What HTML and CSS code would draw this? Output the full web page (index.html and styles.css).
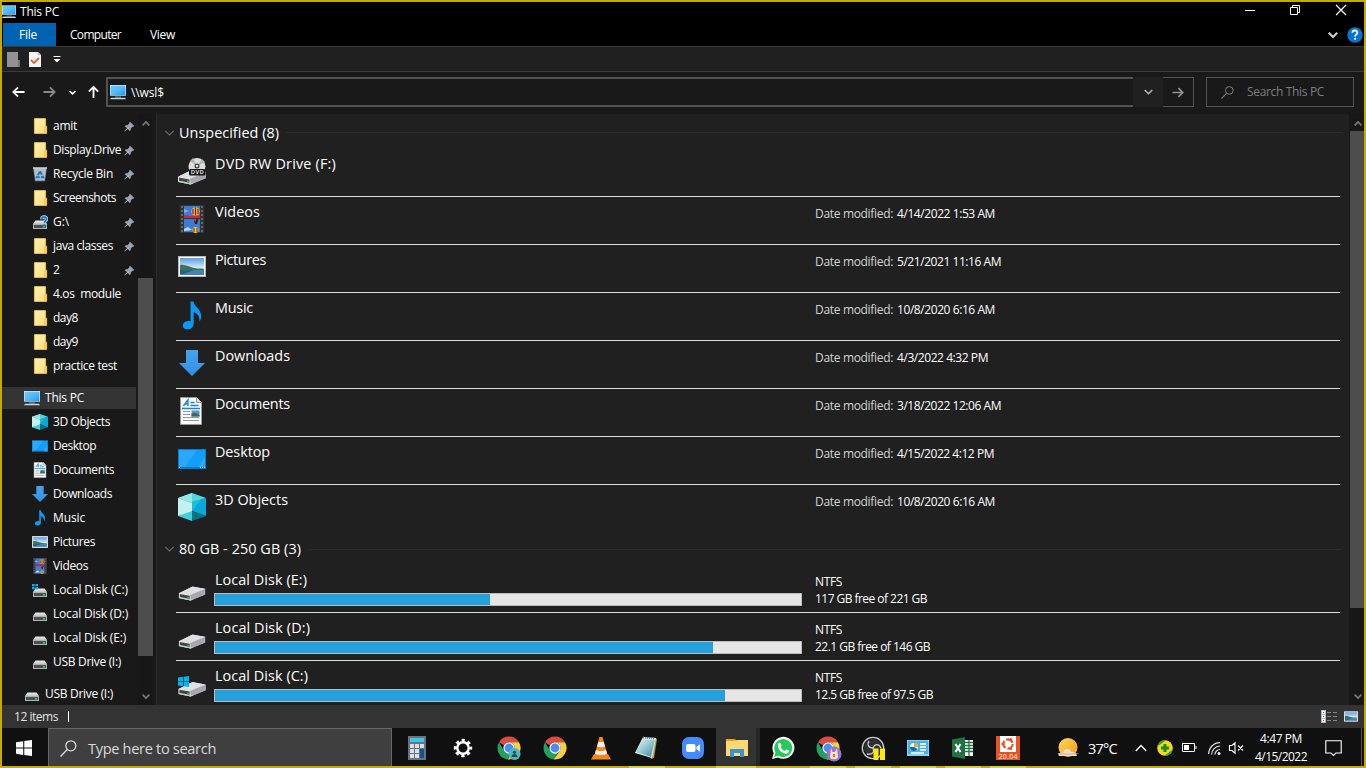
FILE: index.html
```html
<!DOCTYPE html>
<html lang="en">
<head>
<meta charset="utf-8">
<title>This PC</title>
<link rel="stylesheet" href="styles.css">
</head>
<body>
<svg class="defs" width="0" height="0">
<defs>
<linearGradient id="gBlue" x1="0" y1="0" x2="1" y2="1"><stop offset="0" stop-color="#6cc8fb"/><stop offset=".5" stop-color="#55bafa"/><stop offset="1" stop-color="#1e9af0"/></linearGradient>
<linearGradient id="gFold" x1="0" y1="0" x2="1" y2="1"><stop offset="0" stop-color="#ffeeb0"/><stop offset="1" stop-color="#ffdf7d"/></linearGradient>
<linearGradient id="gDisk" x1="0" y1="0" x2="0" y2="1"><stop offset="0" stop-color="#f0f0f2"/><stop offset="1" stop-color="#bfc2c4"/></linearGradient>
<linearGradient id="gSky" x1="0" y1="0" x2="0" y2="1"><stop offset="0" stop-color="#5a9de0"/><stop offset=".6" stop-color="#dbeefa"/></linearGradient>
<linearGradient id="gSun" x1="0" y1="0" x2="1" y2="1"><stop offset="0" stop-color="#ffd95a"/><stop offset="1" stop-color="#f59a1c"/></linearGradient>
<linearGradient id="gDown" x1="0" y1="0" x2="0" y2="1"><stop offset="0" stop-color="#45a3ee"/><stop offset="1" stop-color="#3390e4"/></linearGradient>
<linearGradient id="gNote" x1="0" y1="0" x2="1" y2="1"><stop offset="0" stop-color="#e9f6f7"/><stop offset=".5" stop-color="#8fc6d0"/><stop offset="1" stop-color="#3c8699"/></linearGradient>
<symbol id="pc" viewBox="0 0 16 16"><path fill="#d9f0fb" d="M0 1h16v11H0z"/><path fill="url(#gBlue)" d="M.6 1.6h14.8v9.6H.6z"/><path fill="#7b98aa" d="M0 11.2h16v.8H0zM5 12.5h6v1H5z"/><path fill="#c4d7e1" d="M1 13.8h14l1 1.5H0z"/></symbol>
<symbol id="folder" viewBox="0 0 16 16"><path fill="url(#gFold)" stroke="#efc94c" stroke-width=".8" d="M2.4.5h11.2v7.6h1v7.4H2.4z"/><path fill="#ffd867" stroke="#e3b637" stroke-width=".6" d="M12.6 8.4h2v6.8h-2z"/></symbol>
<symbol id="bin" viewBox="0 0 16 16"><path fill="#7d868d" d="M1 1.5h14l-2 13.8H3z"/><path fill="#b6bdc3" d="M2 2.8h12l-1.6 11.5H3.6z"/><path fill="#dfe3e6" d="M1 1.4h14v1.3H1z"/><path fill="none" stroke="#1379d2" stroke-width="1.9" stroke-dasharray="4 1.1" d="M8 5.2l3.2 6H4.8z"/></symbol>
<symbol id="pin" viewBox="0 0 12 12"><path fill="#9aa7b0" d="M6.5.8l4.7 4.7-1.2.8-.8-.1-1.9 2 .1 1.7-1.1 1.1L4 8.6.8 11.5.3 11 3.2 7.9.9 5.6 2.1 4.5l1.7.1 2-1.9-.1-.9z"/></symbol>
<symbol id="disk" viewBox="0 0 16 16"><path fill="url(#gDisk)" d="M3.4 6.5h9.2L15 10H1z"/><path fill="#c6cbce" d="M1 10h14v5H1z"/><path fill="#4a4f51" d="M1.8 10.8h12.4v3.4H1.8z"/><path fill="#27e04c" d="M11 12h2v1.4h-2z"/></symbol>
<symbol id="win" viewBox="0 0 12 12"><path fill="currentColor" d="M0 1.7l5.4-.8v4.8H0zM6.2.8L12 0v5.7H6.2zM0 6.4h5.4v4.8L0 10.4zM6.2 6.4H12V12l-5.8-.8z"/></symbol>
<symbol id="diskc" viewBox="0 0 16 16"><use href="#disk"/><path fill="#00b2f2" d="M0 2h2.7v2.3H0zM3.4 2H6v2.3H3.4zM0 5h2.7v2.3H0zM3.4 5H6v2.3H3.4z"/></symbol>
<symbol id="unk" viewBox="0 0 16 16"><use href="#disk"/><path d="M9.7 5.2C9.8 2.100 14.7 2.200 14.6 5.100c0 1.900-2.200 1.900-2.200 3.700" fill="none" stroke="#dceefa" stroke-width="3.200"/><path d="M9.7 5.200C9.800 2.100 14.700 2.200 14.600 5.100c0 1.900-2.200 1.900-2.200 3.700m0 1.400v2" fill="none" stroke="#1678c8" stroke-width="1.900"/></symbol>
<symbol id="cube" viewBox="0 0 28 28"><path fill="#55d5dc" d="M14 0l14 5-14 5L0 5z"/><path fill="#91e8e9" d="M14 0v10L0 5z"/><path fill="#c4f1ef" d="M0 5l14 5v10L0 23z"/><path fill="#42cfda" d="M0 23l14-5v10z"/><path fill="#0aa7d8" d="M14 9l14-4v18l-14-5z"/><path fill="#1bc0d9" d="M14 9l9-2.6L14 18z"/><path fill="#087383" d="M14 18l14 5-14 5z"/></symbol>
<symbol id="desk" viewBox="0 0 28 20"><path fill="#057cc9" d="M0 0h28v20H0z"/><path fill="#149efb" d="M1 1h26v17H1z"/><path fill="#35adff" d="M1 1h18L7 18H1zM20 18l7-10v10z" opacity=".65"/><path fill="#fff" d="M1 18.2h1v.8H1zM22 18.2h1v.8h-1zm2 0h1v.8h-1zm2 0h1v.8h-1z"/></symbol>
<symbol id="doc" viewBox="0 0 22 28"><path fill="#fafafa" stroke="#999" d="M.5.5h16l5 5v22H.5z"/><path fill="#ddd" stroke="#999" d="M16.5.5v5h5"/><path stroke="#1686d4" stroke-width="1.300" fill="none" d="M3.500 9L8 2.800V9M5 7h3M10.500 5.500h4M10.500 8.500h8M2 11.500h18"/><path stroke="#999" stroke-width="1" d="M3 14.5h7M3 17.5h7M3 20.5h16M3 23.5h16"/><path fill="#5a93c4" d="M11.5 13.5h8v6h-8z"/><path fill="#386b55" d="M11.5 17c3-2 5-1 8 1v1.5h-8z"/></symbol>
<symbol id="down" viewBox="0 0 26 26"><path fill="url(#gDown)" d="M7 0h12v13h7L13 26 0 13h7z"/></symbol>
<symbol id="music" viewBox="0 0 20 30"><path fill="#0d98f5" d="M8.5.5h3c.5 5 8 8 8 15 0 2.4-.7 4.2-1.8 6 .3-5.5-1.600-8-6-10v12c0 3.500-3 5.700-6 5.700-3.300 0-5.700-1.600-5.200-4.500.5-2.800 4.500-4.800 8-3.500z"/></symbol>
<symbol id="pic" viewBox="0 0 28 21"><path fill="#b7bbbc" d="M0 0h28v21H0z"/><path fill="#fff" d="M1 1h26v19H1z"/><path fill="url(#gSky)" d="M2 2h24v17H2z"/><path fill="#3c7359" d="M2 9c5-1 9 2 14 3s7 0 10 1v2H2z"/><path fill="#4484b0" d="M2 14h24v5H2z"/><path fill="#28618b" d="M2 14h14L6 18H2z"/></symbol>
<symbol id="video" viewBox="0 0 24 28"><path fill="#343434" d="M0 0h24v28H0z"/><path stroke="#666" stroke-width="2" stroke-dasharray="2 2" d="M2 1v27M22 1v27"/><path fill="#3e78d8" d="M4 1h16v12H4zM4 14h16v13H4z"/><path fill="#c72d3d" d="M4 10l7 1 9-1v3H4z"/><path fill="#79aef0" d="M4 4l5 2-5 2z"/><circle cx="15.5" cy="6.500" r="4.200" fill="#f2b81a"/><path stroke="#7b1d4e" stroke-width="1.200" d="M15.5 2.500v8M13 4v5M18 4v5"/><path fill="#222" d="M13.500 14h5l-1.500 5h-2z"/><path fill="#e7471f" d="M13.500 14h3l-1 3z"/><circle cx="15.5" cy="25" r="3" fill="#edd325"/><path stroke="#7b3d1e" stroke-width="1.200" d="M14 23v4M17 23v4"/><path fill="#bbd9ff" d="M4 24l4-2 4 3-8 1z"/></symbol>
<symbol id="drive" viewBox="0 0 28 16"><path fill="#e8e8ea" d="M0 7.8L14.5.5 28 3v6L12.5 15.5 0 12.8z"/><path fill="#e0e0e4" d="M.5 7.5L14.5.8 27.5 3 12 9.7z"/><path fill="#a7a8ab" d="M12 9.7L28 3v6l-15.5 6.5z"/><path fill="#434546" d="M1 8.4l10.5 2v4L1 12.2z"/><path fill="#c8c9cb" d="M0 13l12.5 2.5 3-1.2L1 11.8z"/><path fill="#25b83e" d="M9 11.5h2v2H9z"/></symbol>
<symbol id="dvd" viewBox="0 0 28 28"><use href="#drive" y="12" width="28" height="16"/><circle cx="19" cy="9.500" r="8.500" fill="#dcdddd"/><path fill="#b1b4b5" d="M19 9L12 4l3-3zM19 9l8-4-3-3z"/><circle cx="19" cy="9" r="2.500" fill="#36393b"/><circle cx="19" cy="9" r="1.300" fill="#ddd"/><rect x="11" y="12" width="16.500" height="6.500" rx="1.500" fill="#111"/><text x="19.200" y="17.300" text-anchor="middle" font-family="Open Sans,sans-serif" font-size="5.800" font-weight="600" fill="#fff" textLength="13">DVD</text></symbol>
<symbol id="mag" viewBox="0 0 16 16"><circle cx="10.2" cy="5.5" r="4.7" fill="none" stroke="currentColor" stroke-width="1.2"/><path stroke="currentColor" stroke-width="1.3" d="M6.8 9L.5 15.5"/></symbol>
<symbol id="chev" viewBox="0 0 10 6"><path fill="none" stroke="currentColor" d="M.8.8L5 5 9.2.8"/></symbol>
<symbol id="arrow" viewBox="0 0 14 12"><path fill="none" stroke="currentColor" stroke-width="2" d="M13.5 6H1.5M6.5 1l-5 5 5 5"/></symbol>
<symbol id="chrome" viewBox="0 0 24 24"><path fill="#dd4b3e" d="M2 6.3A11.5 11.5 0 0 1 22 6.3H12A5.7 5.7 0 0 0 7 9.2z"/><path fill="#20a15d" d="M2 6.3A11.5 11.5 0 0 0 10.7 23.4L16 15A5.8 5.8 0 0 1 7 14.8z"/><path fill="#fbce3c" d="M22 6.3A11.5 11.5 0 0 1 10.7 23.4L17 14.5A5.7 5.7 0 0 0 12 6.3z"/><circle cx="12" cy="12" r="5.7" fill="#f6f4ee"/><circle cx="12" cy="12" r="4.4" fill="#4b8df0"/></symbol>
</defs>
</svg>
<div class="screen">
  <header class="titlebar">
    <svg class="i15"><use href="#pc"/></svg><span class="t" data-w="39">This PC</span>
    <div class="winbtns">
      <svg width="10" height="10"><path d="M0 5.5h10" stroke="#fff"/></svg>
      <svg width="10" height="10"><path d="M.5 2.5h7v7h-7zM2.5 2.5v-2h7v7h-2" fill="none" stroke="#fff"/></svg>
      <svg width="10" height="10"><path d="M0 0l10 10M10 0L0 10" stroke="#fff" stroke-width="1.2"/></svg>
    </div>
  </header>
  <nav class="tabs">
    <span class="tab file"><span class="t" data-w="18">File</span></span>
    <span class="tab comp"><span class="t" data-w="51">Computer</span></span>
    <span class="tab view"><span class="t" data-w="25">View</span></span>
    <div class="help"><svg class="hchev"><use href="#chev"/></svg><svg width="16" height="16"><circle cx="8" cy="8" r="7.7" fill="#0873d4"/><path d="M5.4 5.8C5.6 2.6 10.7 2.8 10.3 6c-.2 1.7-2.2 1.6-2.2 3.5m0 1.3v2" fill="none" stroke="#fff" stroke-width="1.8"/></svg></div>
  </nav>
  <div class="quick">
    <svg width="13" height="15"><path fill="#929292" d="M0 0h11v8h2v7H0z"/><path fill="#777" d="M11 8h2v7h-2z"/></svg>
    <svg width="12" height="15"><path fill="#f5f5f5" d="M0 0h9l3 3v12H0z"/><path fill="#bbb" d="M9 0v3h3z"/><path d="M2 8l3 3 5-5" fill="none" stroke="#e9602c" stroke-width="1.8"/></svg>
    <svg width="8" height="7"><path fill="#fff" d="M.5 0h7v1h-7zM.5 3h7L4 6.5z"/></svg>
  </div>
  <div class="address">
    <div class="arrows">
      <svg class="ar"><use href="#arrow"/></svg><svg class="ar fwd"><use href="#arrow"/></svg><svg class="tiny"><use href="#chev"/></svg><svg class="ar up"><use href="#arrow"/></svg>
    </div>
    <div class="path"><svg class="i16"><use href="#pc"/></svg><span class="t" data-w="33">\\wsl$</span></div>
    <div class="drop"><svg class="c9"><use href="#chev"/></svg></div>
    <div class="go"><svg class="goar"><use href="#arrow"/></svg></div>
    <div class="search"><svg class="smag"><use href="#mag"/></svg><span class="t" data-w="77">Search This PC</span></div>
  </div>
  <main class="body">
    <aside class="side">
      <div class="tree">
        <div class="n"><svg><use href="#folder"/></svg><span class="t" data-w="24">amit</span><svg class="p"><use href="#pin"/></svg></div>
        <div class="n"><svg><use href="#folder"/></svg><span class="t" data-w="68">Display.Drive</span><svg class="p"><use href="#pin"/></svg></div>
        <div class="n"><svg><use href="#bin"/></svg><span class="t" data-w="60">Recycle Bin</span><svg class="p"><use href="#pin"/></svg></div>
        <div class="n"><svg><use href="#folder"/></svg><span class="t" data-w="63">Screenshots</span><svg class="p"><use href="#pin"/></svg></div>
        <div class="n"><svg><use href="#unk"/></svg><span class="t" data-w="16">G:\</span><svg class="p"><use href="#pin"/></svg></div>
        <div class="n"><svg><use href="#folder"/></svg><span class="t" data-w="60">java classes</span><svg class="p"><use href="#pin"/></svg></div>
        <div class="n"><svg><use href="#folder"/></svg><span class="t">2</span><svg class="p"><use href="#pin"/></svg></div>
        <div class="n"><svg><use href="#folder"/></svg><span class="t" data-w="68">4.os&nbsp; module</span></div>
        <div class="n"><svg><use href="#folder"/></svg><span class="t" data-w="25">day8</span></div>
        <div class="n"><svg><use href="#folder"/></svg><span class="t" data-w="25">day9</span></div>
        <div class="n"><svg><use href="#folder"/></svg><span class="t" data-w="64">practice test</span></div>
        <div class="n top sel"><svg><use href="#pc"/></svg><span class="t" data-w="39">This PC</span></div>
        <div class="n"><svg><use href="#cube"/></svg><span class="t" data-w="57">3D Objects</span></div>
        <div class="n"><svg><use href="#desk"/></svg><span class="t" data-w="43">Desktop</span></div>
        <div class="n"><svg><use href="#doc"/></svg><span class="t" data-w="61">Documents</span></div>
        <div class="n"><svg><use href="#down"/></svg><span class="t" data-w="59">Downloads</span></div>
        <div class="n"><svg><use href="#music"/></svg><span class="t" data-w="32">Music</span></div>
        <div class="n"><svg><use href="#pic"/></svg><span class="t" data-w="42">Pictures</span></div>
        <div class="n"><svg><use href="#video"/></svg><span class="t" data-w="35">Videos</span></div>
        <div class="n"><svg><use href="#diskc"/></svg><span class="t" data-w="75">Local Disk (C:)</span></div>
        <div class="n"><svg><use href="#disk"/></svg><span class="t" data-w="75">Local Disk (D:)</span></div>
        <div class="n"><svg><use href="#disk"/></svg><span class="t" data-w="73">Local Disk (E:)</span></div>
        <div class="n"><svg><use href="#disk"/></svg><span class="t" data-w="68">USB Drive (I:)</span></div>
        <div class="n top"><svg><use href="#disk"/></svg><span class="t" data-w="68">USB Drive (I:)</span></div>
      </div>
      <div class="sbar left"><svg class="sc flip"><use href="#chev"/></svg><i></i><svg class="sc"><use href="#chev"/></svg></div>
    </aside>
    <section class="list">
      <div class="group"><svg class="gc"><use href="#chev"/></svg><span class="b" data-w="100">Unspecified (8)</span><hr></div>
      <div class="row"><svg class="ic"><use href="#dvd"/></svg><span class="b" data-w="121">DVD RW Drive (F:)</span></div>
      <div class="row"><svg class="ic"><use href="#video"/></svg><span class="b" data-w="45">Videos</span><span class="date"><em class="t" data-w="78">Date modified:</em><span class="t" data-w="98">4/14/2022 1:53 AM</span></span></div>
      <div class="row"><svg class="ic pic"><use href="#pic"/></svg><span class="b" data-w="51">Pictures</span><span class="date"><em class="t" data-w="78">Date modified:</em><span class="t" data-w="104">5/21/2021 11:16 AM</span></span></div>
      <div class="row"><svg class="ic mus"><use href="#music"/></svg><span class="b" data-w="38">Music</span><span class="date"><em class="t" data-w="78">Date modified:</em><span class="t" data-w="98">10/8/2020 6:16 AM</span></span></div>
      <div class="row"><svg class="ic dwn"><use href="#down"/></svg><span class="b" data-w="75">Downloads</span><span class="date"><em class="t" data-w="78">Date modified:</em><span class="t" data-w="91">4/3/2022 4:32 PM</span></span></div>
      <div class="row"><svg class="ic docu"><use href="#doc"/></svg><span class="b" data-w="75">Documents</span><span class="date"><em class="t" data-w="78">Date modified:</em><span class="t" data-w="104">3/18/2022 12:06 AM</span></span></div>
      <div class="row"><svg class="ic deskic"><use href="#desk"/></svg><span class="b" data-w="55">Desktop</span><span class="date"><em class="t" data-w="78">Date modified:</em><span class="t" data-w="97">4/15/2022 4:12 PM</span></span></div>
      <div class="row last"><svg class="ic"><use href="#cube"/></svg><span class="b" data-w="73">3D Objects</span><span class="date"><em class="t" data-w="78">Date modified:</em><span class="t" data-w="98">10/8/2020 6:16 AM</span></span></div>
      <div class="group second"><svg class="gc"><use href="#chev"/></svg><span class="b" data-w="122">80 GB - 250 GB (3)</span><hr></div>
      <div class="row"><svg class="ic drv"><use href="#drive"/></svg><div class="vol"><span class="b" data-w="92">Local Disk (E:)</span><div class="bar"><i style="width:275px"></i></div></div><div class="cap"><span class="t" data-w="27">NTFS</span><span class="t" data-w="112">117 GB free of 221 GB</span></div></div>
      <div class="row"><svg class="ic drv"><use href="#drive"/></svg><div class="vol"><span class="b" data-w="95">Local Disk (D:)</span><div class="bar"><i style="width:498px"></i></div></div><div class="cap"><span class="t" data-w="27">NTFS</span><span class="t" data-w="115">22.1 GB free of 146 GB</span></div></div>
      <div class="row"><svg class="ic cdrv" viewBox="0 0 28 21"><use href="#drive" y="5.5" width="28" height="15.5"/><use href="#win" class="cy" width="11" height="11"/></svg><div class="vol"><span class="b" data-w="93">Local Disk (C:)</span><div class="bar"><i style="width:510px"></i></div></div><div class="cap"><span class="t" data-w="27">NTFS</span><span class="t" data-w="118">12.5 GB free of 97.5 GB</span></div></div>
    </section>
    <div class="sbar right"><svg class="sc flip"><use href="#chev"/></svg><i></i><svg class="sc"><use href="#chev"/></svg></div>
  </main>
  <div class="status"><span class="t" data-w="44">12 items</span><b></b>
    <div class="modes"><svg width="16" height="13"><path fill="#bbb" d="M0 0h5v13H0z"/><path fill="#fff" d="M1 1h3v3H1zM1 5h3v3H1zM1 9h3v3H1z"/><path fill="#26a" d="M2 2h1v1H2zM2 6h1v1H2z"/><path fill="#c33" d="M2 10h1v1H2z"/><path stroke="#858585" d="M6 2.5h4m2 0h4M6 6.5h4m2 0h4M6 10.5h4m2 0h4"/></svg><svg width="14" height="11"><use href="#pic"/></svg></div>
  </div>
  <footer class="task">
    <div class="start"><svg><use href="#win"/></svg></div>
    <div class="tsearch"><svg><use href="#mag"/></svg><span data-w="128">Type here to search</span></div>
    <div class="apps">
      <div class="a"><svg width="18" height="24"><path fill="#68737e" d="M0 0h18v24H0z"/><path fill="#3cc5ef" d="M2 2h14v4H2z"/><path fill="#d9dfe5" d="M2 8h4v4H2zM7 8h4v4H7zM12 8h4v4h-4zM2 13h4v4H2zM7 13h4v4H7zM2 18h4v4H2zM7 18h4v4H7z"/><path fill="#15528d" d="M12 13h4v9h-4z"/></svg></div>
      <div class="a"><svg width="20" height="20"><circle cx="10" cy="10" r="7.700" fill="none" stroke="#fff" stroke-width="3" stroke-dasharray="3.200 2.847" stroke-dashoffset="1.600"/><circle cx="10" cy="10" r="5.700" fill="none" stroke="#fff" stroke-width="2.400"/></svg></div>
      <div class="a"><svg width="24" height="24"><use href="#chrome"/><circle cx="17.500" cy="18" r="6" fill="#50b7bd"/><circle cx="17.500" cy="16.300" r="1.600" fill="#174f56"/><path fill="#174f56" d="M14.500 21c0-4 6-4 6 0z"/></svg></div>
      <div class="a"><svg width="24" height="24"><use href="#chrome"/></svg></div>
      <div class="a"><svg width="20" height="23"><path fill="#f58812" d="M3 17h14l3 5.500H0z"/><path fill="#f58812" d="M8.500 0h3l5 18c-2 2-11 2-13 0z"/><path fill="#f1f1f1" d="M7.300 5h5.400l1.300 4.500c-2 1-6 1-8 0zM5 13c3 1.500 7 1.500 10 0l1 3.500c-3 2-9 2-12 0z"/></svg></div>
      <div class="a"><svg width="24" height="24"><path fill="#b49a58" d="M20 2l2 1-3 19-3 1z"/><path fill="#e8f0f0" d="M8 1l13 1-4 20L0 17z"/><path fill="url(#gNote)" d="M8 3l12 1-4 17L1 16z"/><path stroke="#68777b" stroke-dasharray="1 1" stroke-width="2" d="M8 1.500l12 1"/></svg></div>
      <div class="a"><svg width="24" height="24"><rect x="1" y="1" width="22" height="22" rx="7" fill="#438bff"/><rect x="5" y="8" width="9.500" height="8" rx="2" fill="#fff"/><path fill="#fff" d="M15.500 10.700l3.500-2.500v7.600l-3.500-2.500z"/></svg></div>
      <div class="a ex"><svg width="22" height="20"><path fill="#e3a11b" d="M0 1h9l2 2v2H0z"/><path fill="#ffd86f" d="M0 3h9l2-1h11v16H0z"/><path fill="#3593dc" d="M4 19v-8h14v8h-4v-4H8v4z"/></svg></div>
      <div class="a n45"><svg width="24" height="24"><path fill="#fff" d="M1 23l1.700-6A11 11 0 1 1 7 21.400z"/><path fill="#27c95b" d="M3 21l1.400-4.500A9 9 0 1 1 7.500 19.700z"/><path fill="#fff" d="M7.300 7.500c1-1.300 2-.9 2.400 0l.8 1.800c.2.700-.5 1.200-1 1.700 1 2 2.300 3.200 4.200 4 .7-.7 1.300-1.800 2-1.500l2 1c1 .5-.5 3-2.400 3.200-4.600 0-10-5.400-8-10.200z"/></svg></div>
      <div class="a n45"><svg width="24" height="24"><use href="#chrome" width="24" height="24"/><circle cx="18" cy="18" r="7.500" fill="#9075d8"/><path fill="#ffe5bd" d="M15 12l1.500 4h2.500l2-4 1 9c0 3-8 3-8 0z"/><path fill="#ef6b31" d="M17 18h2v3h-2z"/></svg></div>
      <div class="a n45"><svg width="24" height="24"><circle cx="12" cy="12" r="10.700" fill="#171718" stroke="#ccc" stroke-width="1.300"/><circle cx="12" cy="12" r="9" fill="#303033"/><path fill="none" stroke="#c8c8c8" stroke-width="1.400" d="M12 12c-5 0-6-4-4-7M12 12c2-5 6-4 8 0M12 12c2 4-1 7-6 6"/><path fill="#ffe90b" d="M12.500 12.500h5V24h-5zM19 12.500h5V24h-5z"/></svg></div>
      <div class="a n45"><svg width="22" height="16"><path fill="#84d2f7" d="M0 0h22v16H0z"/><path fill="#4eb0e5" d="M1 1h20v13H1z"/><circle cx="7" cy="7" r="4" fill="#eff"/><path fill="#f6a21e" d="M7 7V3a4 4 0 0 1 4 4z"/><path fill="#1767a8" d="M7 7l3.500 2A4 4 0 0 1 3 7z"/><path stroke="#fff" stroke-width="1.500" d="M13 4h6M13 7h6M13 10h6M4 13h13"/></svg></div>
      <div class="a n45"><svg width="22" height="22"><path fill="#fff" d="M11 3h10v16H11z"/><path stroke="#207245" stroke-width="1.300" d="M12 5.500h9M12 8.500h9M12 11.500h9M12 14.500h9M17 3v16"/><path fill="#207245" d="M0 2.500L13 0v22L0 19.500z"/><path stroke="#fff" stroke-width="2" d="M3.500 7l5 8M8.500 7l-5 8"/></svg></div>
      <div class="a n45"><svg width="24" height="24"><path fill="#e9531f" d="M0 0h24v24H0z"/><path fill="#fff" d="M4 0h16v16H4z"/><circle cx="12" cy="8" r="4.600" fill="none" stroke="#e9531f" stroke-width="2.200" stroke-dasharray="7.600 2"/><g fill="#e9531f"><circle cx="6.800" cy="8" r="1.500"/><circle cx="14.700" cy="3.400" r="1.500"/><circle cx="14.700" cy="12.600" r="1.500"/></g><text x="12" y="23.300" text-anchor="middle" font-family="Open Sans,sans-serif" font-size="7" fill="#fff" textLength="19">20.04</text></svg></div>
    </div>
    <div class="tray">
      <svg width="23" height="20"><circle cx="11" cy="9.500" r="9.500" fill="url(#gSun)"/><path fill="#f1dfcd" d="M2 18c-2-3 2-4 4-3 0-5 7-5 8-1 2-1 5 0 6 4z"/><path fill="#d6ba9b" d="M0 15h22l-4 2H3z" opacity=".7"/></svg>
      <span class="deg" data-w="29">37°C</span>
      <svg class="up2" width="12" height="8"><path d="M.8 7L6 1.500 11.200 7" fill="none" stroke="#fff" stroke-width="1.300"/></svg>
      <svg class="plus" width="16" height="16"><circle cx="8" cy="8" r="7.800" fill="#f0d91e"/><path fill="#3f9f2c" d="M.5 6a8 8 0 0 1 8-5.800L6 2.500 2.500 5zM15.500 10a8 8 0 0 1-8 5.800l3-2.300 3-2.500z"/><path fill="#188c2a" d="M6.500 4h3v2.500H12v3H9.500V12h-3V9.500H4v-3h2.500z"/></svg>
      <svg class="bat" width="15" height="10"><path d="M.5.5h12v8H.5zM14 3v3" fill="none" stroke="#fff"/><path fill="#fff" d="M2 2h5v5H2z"/></svg>
      <svg class="wifi" width="13" height="13"><g fill="none" stroke="#ddd" stroke-width="1.200"><path d="M.7 12A11.300 11.300 0 0 1 12 .7M3.700 12.500A8.500 8.500 0 0 1 12 4M7 12.500A5 5 0 0 1 12 7.500"/></g><circle cx="11" cy="11.500" r="1.500" fill="#fff"/></svg>
      <svg class="vol2" width="15" height="12"><path fill="none" stroke="#fff" stroke-width="1.100" d="M.5 3.500H3L6 .8v10.400L3 8.500H.5zM9 3.500l5 5M14 3.500l-5 5"/></svg>
      <div class="clock"><span class="t" data-w="42">4:47 PM</span><span class="t" data-w="52">4/15/2022</span></div>
      <svg class="note" width="17" height="17"><path fill="none" stroke="#fff" stroke-width="1.100" d="M.8.700h15.400v12.300H11L8.500 15.500 6 13H.8z"/></svg>
    </div>
  </footer>
  <div class="frame"><i class="m1"></i><i class="m2"></i><i class="m3"></i><i class="m3 m4"></i><i class="m3 m5"></i><i class="m3 m6"></i><i class="m3 m7"></i></div>
</div>
<script src="fit.js"></script>
</body>
</html>
```
FILE: styles.css
```css
* { box-sizing: border-box; }
body { margin: 0; background: #000; overflow: hidden; font-family: "Open Sans", "Noto Sans", sans-serif; color: #fff; }
svg { display: block; flex: none; overflow: visible; stroke-width: 1.5; }
.defs { position: absolute; }
i, em { font-style: normal; }
.screen { position: relative; width: 1366px; height: 768px; display: flex; flex-direction: column; white-space: nowrap; }
.t { font-size: 12px; line-height: 16px; }
.b { font-size: 14.4px; line-height: 20px; }
.titlebar { height: 23px; padding: 0 20px 0 2px; display: flex; align-items: center; background: #000; }
.titlebar .t, .tab .t, .status .t { padding-top: 1px; }
.i15 { width: 14px; height: 15px; margin-right: 4px; }
.i16 { width: 16px; height: 16px; margin-right: 5px; }
.winbtns { margin-left: auto; display: flex; gap: 35px; padding-bottom: 3px; }
.winbtns svg { stroke-width: 1; }
.winbtns svg:last-child { margin-left: 1px; }
.tabs { height: 23px; display: flex; align-items: center; background: #000; padding-left: 3px; }
.tab { display: flex; align-items: center; height: 23px; }
.file { width: 53px; padding-left: 16px; background: #0063b1; }
.comp { padding-left: 14px; width: 94px; }
.help { margin-left: auto; display: flex; align-items: center; gap: 9px; padding-right: 3px; }
.hchev { width: 10px; height: 6px; color: #ccc; stroke-width: 2.2; }
.quick { height: 26px; border-top: 1px solid #3b3b3b; border-bottom: 1px solid #3b3b3b; background: #202020; display: flex; align-items: center; padding-left: 7px; }
.quick svg:nth-child(2) { margin: 0 12px 0 9px; }
.address { height: 41px; background: #191919; display: flex; align-items: center; padding-bottom: 1px; }
.arrows { width: 106px; display: flex; align-items: center; padding-left: 12px; }
.ar { width: 13px; height: 12px; }
.fwd { transform: scaleX(-1); color: #888; margin-left: 18px; }
.tiny { width: 7px; height: 5px; margin-left: 13px; stroke-width: 2.2; }
.up { transform: rotate(90deg); margin-left: 11px; }
.path { width: 1027px; height: 30px; border: 2px solid #535353; border-right: 0; display: flex; align-items: center; padding-left: 2px; }
.path .t { padding-top: 2px; }
.drop { width: 30px; height: 30px; background: #202020; display: flex; align-items: center; justify-content: center; color: #bbb; }
.c9 { width: 9px; height: 6px; }
.go { width: 31px; height: 30px; border: 1px solid #535353; border-left: 0; display: flex; align-items: center; justify-content: center; color: #949494; }
.goar { width: 12px; height: 11px; transform: scaleX(-1); }
.search { margin-left: 12px; width: 148px; height: 30px; border: 1px solid #535353; display: flex; align-items: center; color: #7d7d7d; }
.smag { width: 13px; height: 13px; margin: 0 12px 0 14px; }
.search .t { margin-left: 1px; }
.body { height: 592px; display: flex; background: #202020; overflow: hidden; }
.side { width: 157px; display: flex; background: #191919; border-right: 1px solid #2b2b2b; }
.tree { width: 138px; padding-top: 1px; }
.n { height: 24px; display: flex; align-items: center; padding-left: 32px; }
.n svg { width: 16px; height: 16px; margin-right: 5px; }
.n .p { width: 11px; height: 11px; margin: 0 3px 0 auto; }
.top { margin-top: 8px; padding-left: 24px; }
.sel { background: linear-gradient(#333,#333) 2px 1px / 134px 22px no-repeat; }
.sbar { display: flex; flex-direction: column; align-items: center; color: #777; background: #171717; }
.sbar i { background: #4d4d4d; }
.sc { width: 8px; height: 5px; stroke-width: 2.2; }
.flip { transform: scaleY(-1); margin-top: 8px; }
.left { width: 15px; }
.left i { width: 15px; height: 378px; margin-top: 152px; margin-bottom: 38px; }
.right { width: 17px; }
.right i { width: 15px; height: 477px; margin-top: 5px; margin-bottom: 86px; }
.list { width: 1192px; padding-left: 7px; border-top: 1px solid #191919; }
.group { height: 35px; display: flex; align-items: center; padding-top: 2px; }
.second { height: 32px; padding-top: 0; }
.gc { width: 11px; height: 6px; margin-right: 4px; color: #6b6b6b; stroke-width: 1.1; }
.group hr { border: 0; height: 1px; background: #2c2c2c; flex: 1; margin: 0 7px 0 7px; }
.row { width: 1164px; height: 48px; margin-left: 12px; border-bottom: 1px solid #dedede; display: flex; align-items: flex-start; }
.last { border-color: transparent; }
.ic { width: 28px; height: 28px; margin: 8px 9px 0 2px; }
.pic { height: 21px; margin-top: 11px; }
.deskic { height: 20px; margin-top: 12px; }
.mus { height: 29px; }
.dwn { height: 26px; margin-top: 9px; }
.docu { margin: 8px 10px 0 1px; }
.drv { height: 15px; margin-top: 21px; }
.cdrv { height: 21px; margin-top: 15px; }
.cy { color: #00b5f0; }
.row > .b { width: 600px; margin-top: 5px; }
.date { display: flex; margin-top: 9px; }
.date em { color: #d4d4d4; width: 82px; }
.vol { width: 600px; padding-top: 5px; display: flex; flex-direction: column; align-items: flex-start; }
.bar { width: 588px; height: 13px; margin: 3px 0 0 -1px; background: #e6e6e6; border: 1px solid #bcbcbc; display: flex; }
.bar i { background: #26a0da; }
.cap { display: flex; flex-direction: column; align-items: flex-start; padding-top: 9px; gap: 1px; }
.status { height: 23px; background: #333; display: flex; align-items: center; padding: 0 8px 0 14px; color: #e2e2e2; }
.status b { width: 1px; height: 11px; background: #fff; margin-left: 10px; }
.modes { margin-left: auto; display: flex; align-items: center; gap: 7px; }
.modes svg { stroke-width: 1; }
.task { height: 40px; background: #101010; display: flex; }
.task::after { content: ""; width: 1px; background: #555; margin: 0 4px 0 auto; }
.start { width: 48px; display: flex; align-items: center; padding-left: 16px; }
.start svg { width: 16px; height: 16px; }
.tsearch { width: 344px; border: 1px solid #666; background: #3f3f3f; display: flex; align-items: center; padding-left: 11px; font-size: 14.6px; color: #dadada; }
.tsearch svg { width: 17px; height: 17px; margin-right: 11px; }
.apps { display: flex; padding-left: 2px; }
.a { width: 46px; display: flex; align-items: center; justify-content: center; }
.ex { width: 44px; background: #333; border-right: 4px solid #262626; padding-left: 1px; }
.n45 { width: 45px; }
.tray { display: flex; align-items: center; margin-left: 27px; }
.tray svg, .row svg, .n svg, .a svg { stroke-width: 1; }
.deg { font-size: 14.6px; margin-left: 8px; }
.up2 { margin-left: 18px; }
.plus { margin-left: 10px; }
.bat { margin-left: 9px; }
.wifi { margin-left: 11px; margin-top: 1px; }
.vol2 { margin-left: 8px; }
.clock { margin-left: 11px; width: 52px; display: flex; flex-direction: column; align-items: center; }
.clock .t { line-height: 18px; }
.note { margin-left: 18px; }
.frame { position: absolute; inset: 0; border: 2px solid #c5aa00; pointer-events: none; }
.frame i { position: absolute; bottom: -2px; height: 2px; width: 36px; background: #d8cf35; }
.frame .m1 { left: 627px; }
.frame .m2 { left: 714px; width: 40px; }
.frame .m3 { left: 808px; }
.frame .m4 { left: 853px; }
.frame .m5 { left: 898px; }
.frame .m6 { left: 943px; }
.frame .m7 { left: 988px; }
```
FILE: fit.js
```js
// Tracks each label so that it occupies its declared width.
document.querySelectorAll('[data-w]').forEach(function (el) {
  var range = document.createRange();
  range.selectNodeContents(el);
  var natural = range.getBoundingClientRect().width;
  el.style.letterSpacing = (Number(el.dataset.w) - natural) / el.textContent.length + 'px';
});
```
